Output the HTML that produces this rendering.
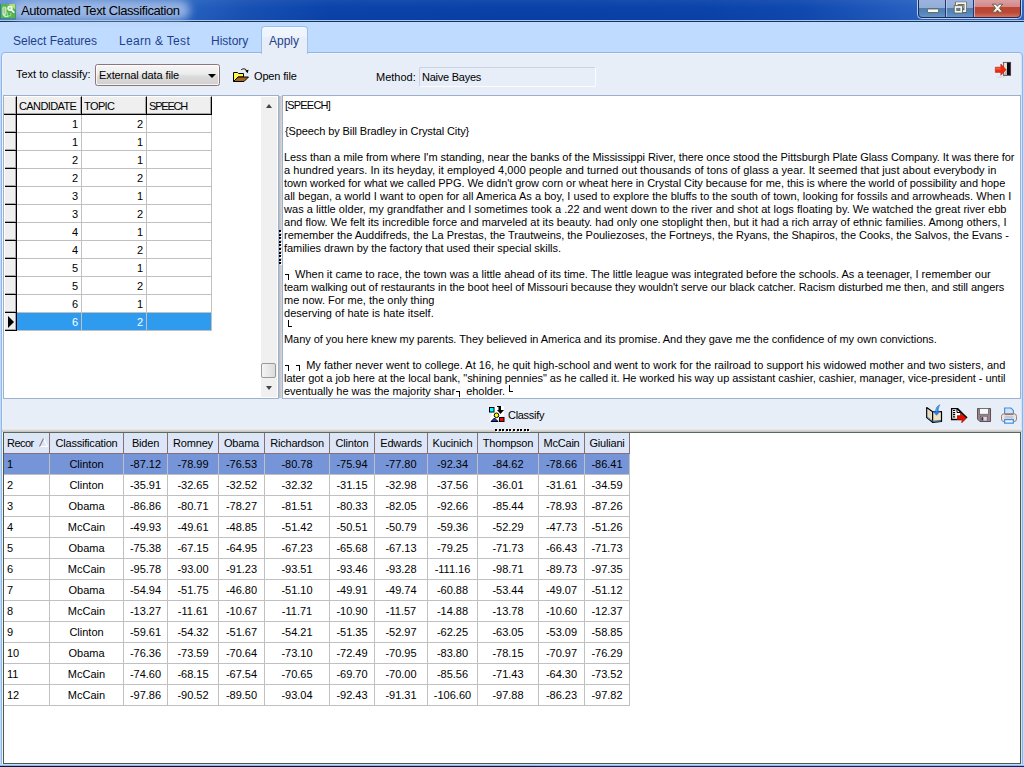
<!DOCTYPE html>
<html><head><meta charset="utf-8">
<style>
*{box-sizing:border-box;margin:0;padding:0}
html,body{width:1024px;height:767px;overflow:hidden;background:#bfdbff;font-family:"Liberation Sans",sans-serif;font-size:11px;color:#000}
.abs{position:absolute}
#title{left:0;top:0;width:1024px;height:22px;background:linear-gradient(90deg,#6492d3 0,#4a7dca 100px,#2560bf 195px,#1750b4 250px,#0a43aa 330px,#0841a8 520px,#0a43aa 700px,#0f49b0 800px,#2660c1 915px,#2c65c4 1024px)}
#title .shade{left:0;top:0;width:1024px;height:22px;background:linear-gradient(180deg,rgba(255,255,255,.05) 0,rgba(255,255,255,0) 8px,rgba(0,0,40,.04) 20px)}
#title .l1{left:0;top:20px;width:1024px;height:1px;background:#a9c6ea}
#title .l2{left:0;top:21px;width:1024px;height:1px;background:#14365c}
#ttext{left:21px;top:3px;font-size:13px;line-height:16px;color:#000;white-space:nowrap;letter-spacing:-.4px}
#tglow{left:12px;top:0px;width:178px;height:20px;border-radius:10px;background:rgba(175,198,235,.8);filter:blur(4px)}
.tab{top:34px;font-size:12px;line-height:15px;color:#1f3f8c;white-space:nowrap}
#panel{left:1px;top:52px;width:1022px;height:714px;background:#e8eef7;border:1px solid #8fb4e7;border-radius:4px 4px 0 0;box-shadow:inset 1px 1px 0 #f1f5fa,inset -1px 0 0 #d5e1f4}
#bot1{left:0;top:764px;width:1024px;height:1px;background:#c7dbf7}#bot2{left:0;top:765px;width:1024px;height:1px;background:#8fb5ea}#bot3{left:0;top:766px;width:1024px;height:1px;background:linear-gradient(90deg,#02143f,#021848 50%,#00277a 55%,#00277a)}
#atab{left:261px;top:26px;width:47px;height:28px;background:linear-gradient(180deg,#f6f9fd 0,#eff5fc 2px,#eef4fc 10px,#e8eef7 10.500px,#e8eef7 100%);border:1px solid #9dbfe9;border-bottom:none;border-radius:4px 4px 0 0}
.t11{font-size:11px;line-height:13px;white-space:nowrap}
#combo{left:95px;top:64px;width:125px;height:22px;border:1px solid #8c767c;border-radius:2.500px;box-shadow:inset 0 0 0 1px rgba(255,255,255,.75);background:linear-gradient(180deg,#f6f6f6 0,#ececec 45%,#dcdcdc 55%,#d0d0d0 100%)}
#combo .arrow{left:112px;top:9px;width:0;height:0;border:4px solid transparent;border-top:4px solid #000;border-bottom:none}
#method{left:419px;top:67px;width:177px;height:20px;border:1px solid #c9d3e3;border-right-color:#fafcff;border-bottom-color:#fafcff;border-radius:2px;background:#e8eef7}
#lgrid{left:3px;top:95px;width:276px;height:304px;background:#fff;border:1px solid #9db0d0}
.lh{top:0;height:19px;letter-spacing:-.6px;background:#efefef;border-right:1px solid #000;border-bottom:1px solid #000;border-top:1px solid #fff;box-shadow:inset -1px -1px 0 rgba(0,0,0,.3);font-size:11px;line-height:16px;white-space:nowrap;overflow:hidden}
.lh span{position:absolute;left:2px;top:1px}
.li{left:1px;width:12px;height:18px;background:#efefef;border-right:1px solid #000;border-bottom:1px solid #000;box-shadow:inset -1px -1px 0 rgba(0,0,0,.3)}
.lc{height:18px;border-right:1px solid #c0c0c0;border-bottom:1px solid #c0c0c0;font-size:11px;line-height:19px;text-align:right;padding-right:3px;background:#fff}
.lc.sel{background:#2f9bef;color:#fff}
#lsb{left:257px;top:1px;width:16px;height:300px;background:#f0f0f0}
#lsb .thumb{left:0;top:266px;width:15px;height:15px;border:1px solid #9a9a9a;border-radius:2px;background:linear-gradient(90deg,#f4f4f4,#dcdcdc)}
#memo{left:282px;top:95px;width:739px;height:304px;background:#fff;border:1px solid #9db0d0;overflow:hidden}
.ml{left:1px;font-size:11px;line-height:13px;white-space:pre;height:13px}
.cn{display:inline-block;width:4px;height:6px;border-top:1px solid #000;border-right:1px solid #000;margin:0 3px 0 1px;vertical-align:-2px}.cl{display:inline-block;width:4px;height:7px;border-left:1px solid #000;border-bottom:1px solid #000;margin:0 1px 0 1px;vertical-align:3px}
#vsplit{left:279px;top:96px;width:3px;height:302px;background:linear-gradient(90deg,#b4b8c0,#cacaca 50%,#dadada)}#vdots{left:279px;top:230px;width:2px;height:36px;background:repeating-linear-gradient(180deg,#000 0,#000 2px,transparent 2px,transparent 3.600px)}#vdotsw{left:280px;top:231px;width:2px;height:36px;background:repeating-linear-gradient(180deg,#fff 0,#fff 2px,transparent 2px,transparent 3.600px)}
#hsplit{left:2px;top:428px;width:1020px;height:4px;background:linear-gradient(180deg,#f6f6f6,#dedede 50%,#bebebe)}
#hdots{left:495px;top:429px;width:35px;height:2px;background:repeating-linear-gradient(90deg,#000 0,#000 2px,transparent 2px,transparent 3.600px)}#hdotsw{left:496px;top:430px;width:35px;height:2px;background:repeating-linear-gradient(90deg,#fff 0,#fff 2px,transparent 2px,transparent 3.600px)}
#bgrid{left:3px;top:432px;width:1018px;height:332px;background:#fff;border:1px solid #4a5a4a;border-top:1px solid #5a6a5a}
.bh{top:0;height:21px;letter-spacing:-.2px;background:#dde6f7;border-right:1px solid #866f78;border-bottom:1px solid #866f78;font-size:11px;line-height:20px;text-align:center;white-space:nowrap;overflow:hidden}
.bh.first{text-align:left;padding-left:3px}
.bc{height:21px;border-right:1px solid #c0c0c0;border-bottom:1px solid #c0c0c0;font-size:11px;line-height:20px;text-align:center;white-space:nowrap;background:#fff}
.bc.first{text-align:left;padding-left:3px}
.bc.bsel{background:#7595d8}
</style></head><body>
<div id="title" class="abs"><div class="abs shade"></div><div class="abs l1"></div><div class="abs l2"></div>
<div id="tglow" class="abs"></div>
<div id="ttext" class="abs">Automated Text Classification</div>
</div>
<div class="abs tab" style="left:13px">Select Features</div>
<div class="abs tab" style="left:119px;letter-spacing:.33px">Learn &amp; Test</div>
<div class="abs tab" style="left:211px">History</div>
<div id="panel" class="abs"></div><div id="bot1" class="abs"></div><div id="bot2" class="abs"></div><div id="bot3" class="abs"></div>
<div id="atab" class="abs"></div>
<div class="abs tab" style="left:269px">Apply</div>

<svg class="abs" style="left:916px;top:0" width="108" height="20" viewBox="0 0 108 20">
<defs>
<linearGradient id="gb" x1="0" y1="0" x2="0" y2="1"><stop offset="0" stop-color="#9db4de"/><stop offset=".48" stop-color="#93acd8"/><stop offset=".5" stop-color="#4d7fae"/><stop offset=".75" stop-color="#5585bd"/><stop offset="1" stop-color="#6a96cc"/></linearGradient>
<linearGradient id="gr" x1="0" y1="0" x2="0" y2="1"><stop offset="0" stop-color="#dba3a6"/><stop offset=".42" stop-color="#d38889"/><stop offset=".46" stop-color="#c0452e"/><stop offset=".72" stop-color="#b5493a"/><stop offset="1" stop-color="#e07258"/></linearGradient>
</defs>
<path d="M1.500 -1V14.500a4 4 0 0 0 4 4H101.500a4 4 0 0 0 4-4V-1z" fill="none" stroke="#c9d9f2" stroke-width="1" opacity=".9"/>
<path d="M2.500 -1V14a3.500 3.500 0 0 0 3.500 3.500H30V-1z" fill="url(#gb)"/>
<path d="M30 -1V17.500H57.500V-1z" fill="url(#gb)"/>
<path d="M57.500 -1V17.500H101a3.500 3.500 0 0 0 3.500-3.500V-1z" fill="url(#gr)"/>
<path d="M2.500 -1V14a3.500 3.500 0 0 0 3.500 3.500H101a3.500 3.500 0 0 0 3.500-3.500V-1" fill="none" stroke="#1d2c55" stroke-width="1"/>
<path d="M29.500 0V17M57.500 0V17" stroke="#2b2f6a" stroke-width="1"/>
<path d="M30.500 0V17M58.500 0V17" stroke="#c6d3ee" stroke-width="1" opacity=".7"/>
<rect x="11.500" y="9" width="11" height="3.500" rx=".5" fill="#fafaf4" stroke="#5b5b45" stroke-width=".8"/>
<path d="M40.800 5.500V3.200h8.500v8h-2.500" fill="none" stroke="#5b5b45" stroke-width="3"/>
<path d="M40.800 5.500V3.200h8.500v8h-2.500" fill="none" stroke="#f7f7ef" stroke-width="1.700"/>
<rect x="38.200" y="5.700" width="8.300" height="7.300" fill="#f7f7ef" stroke="#5b5b45" stroke-width=".8"/>
<rect x="40.700" y="8.200" width="3.300" height="2.500" fill="#5b82b8" stroke="#5b5b45" stroke-width=".6"/>
<path d="M76.300 4.200h3.600l1.600 2.100 1.600-2.100h3.600l-3.300 4 3.300 4h-3.600l-1.600-2.100-1.600 2.100h-3.600l3.300-4z" fill="#f7f7ef" stroke="#5b5b45" stroke-width=".9" stroke-linejoin="round"/>
</svg>
<svg class="abs" style="left:0px;top:3px" width="17" height="17" viewBox="0 0 17 17">
<rect x="0" y="1" width="16" height="15.500" fill="#2f6f9f" opacity=".75"/>
<rect x="1" y="1" width="14.300" height="14.300" fill="#56b548"/>
<path d="M9 1L15.300 1 15.300 6.500z" fill="#b4de74"/>
<path d="M6.500 1h2.500l-1.500 2.500z" fill="#8aa878" opacity=".7"/>
<rect x="2.300" y="3.500" width="4.200" height="8.500" rx="1.800" fill="#c9ecc6" opacity=".9"/>
<path d="M4.200 4.500v6" stroke="#9ab088" stroke-width=".9"/>
<circle cx="10" cy="5.300" r="2.200" fill="#d8f3d0" stroke="#f2fff0" stroke-width="1.100"/>
<circle cx="10" cy="5.300" r=".8" fill="#8ac078"/>
<path d="M11.500 7l2.300 2.200" stroke="#fff" stroke-width="1.700" stroke-linecap="round"/>
<path d="M3 11c.8 2 3 3 5.500 2.200" fill="none" stroke="#c8f0e0" stroke-width="1.400"/>
<path d="M7.500 9.500v3.300h3.300V9.500" fill="none" stroke="#a6dca0" stroke-width=".9"/>
</svg>

<div class="abs t11" style="left:16px;top:68px">Text to classify:</div>
<div class="abs" id="combo"><div class="abs t11" style="left:3px;top:4px;letter-spacing:-.1px">External data file</div><div class="abs arrow"></div></div>
<svg class="abs" style="left:232px;top:67px" width="18" height="16" viewBox="0 0 18 16"><path d="M1.500 14.500V5.500h4l1 1h5v3.500H6.500z" fill="#fff44a" stroke="#000" stroke-width="1" stroke-linejoin="round"/><path d="M1.500 14.500L6 10H16.500L12 14.500z" fill="#a5661f" stroke="#000" stroke-width="1" stroke-linejoin="round"/><path d="M9 3C10.500 1.300 14 1.300 15.200 4.300" fill="none" stroke="#000" stroke-width="1"/><path d="M13.200 3.600L15.600 6.200 16.600 2.800z" fill="#000"/></svg>
<div class="abs t11" style="left:254px;top:70px;letter-spacing:-.15px">Open file</div>
<div class="abs t11" style="left:376px;top:71px">Method:</div>
<div class="abs" id="method"><div class="abs t11" style="left:2px;top:3px;letter-spacing:-.25px">Naive Bayes</div></div>
<svg class="abs" style="left:993px;top:60px" width="19" height="18" viewBox="0 0 19 18"><rect x="10.300" y="2.300" width="7.400" height="13" fill="#0a0a14" stroke="#5a3040" stroke-width=".7"/><rect x="10.700" y="2.700" width="3.300" height="12.300" fill="#e8e2c8"/><path d="M14 9l0 6-3.300 0z" fill="#8a8aa0" opacity=".5"/><path d="M2.300 7.200h5.500V4l5.400 5.700L7.800 15.300V12.400H2.300z" fill="#ee2a10" stroke="#b01808" stroke-width=".5"/><path d="M2.600 8.800h5" stroke="#f88a7a" stroke-width=".8"/><ellipse cx="8" cy="17" rx="5" ry=".8" fill="#d6d6d6" opacity=".8"/></svg>
<div class="abs" id="lgrid">
<div class="abs lh" style="left:0;width:13px"></div>
<div class="abs lh" style="left:13px;width:65px"><span>CANDIDATE</span></div>
<div class="abs lh" style="left:78px;width:65px"><span>TOPIC</span></div>
<div class="abs lh" style="left:143px;width:65px;letter-spacing:-1.2px"><span>SPEECH</span></div>
<div class="abs li" style="top:19px"></div>
<div class="abs lc" style="left:13px;top:19px;width:65px">1</div>
<div class="abs lc" style="left:78px;top:19px;width:65px">2</div>
<div class="abs lc" style="left:143px;top:19px;width:65px"></div>
<div class="abs li" style="top:37px"></div>
<div class="abs lc" style="left:13px;top:37px;width:65px">1</div>
<div class="abs lc" style="left:78px;top:37px;width:65px">1</div>
<div class="abs lc" style="left:143px;top:37px;width:65px"></div>
<div class="abs li" style="top:55px"></div>
<div class="abs lc" style="left:13px;top:55px;width:65px">2</div>
<div class="abs lc" style="left:78px;top:55px;width:65px">1</div>
<div class="abs lc" style="left:143px;top:55px;width:65px"></div>
<div class="abs li" style="top:73px"></div>
<div class="abs lc" style="left:13px;top:73px;width:65px">2</div>
<div class="abs lc" style="left:78px;top:73px;width:65px">2</div>
<div class="abs lc" style="left:143px;top:73px;width:65px"></div>
<div class="abs li" style="top:91px"></div>
<div class="abs lc" style="left:13px;top:91px;width:65px">3</div>
<div class="abs lc" style="left:78px;top:91px;width:65px">1</div>
<div class="abs lc" style="left:143px;top:91px;width:65px"></div>
<div class="abs li" style="top:109px"></div>
<div class="abs lc" style="left:13px;top:109px;width:65px">3</div>
<div class="abs lc" style="left:78px;top:109px;width:65px">2</div>
<div class="abs lc" style="left:143px;top:109px;width:65px"></div>
<div class="abs li" style="top:127px"></div>
<div class="abs lc" style="left:13px;top:127px;width:65px">4</div>
<div class="abs lc" style="left:78px;top:127px;width:65px">1</div>
<div class="abs lc" style="left:143px;top:127px;width:65px"></div>
<div class="abs li" style="top:145px"></div>
<div class="abs lc" style="left:13px;top:145px;width:65px">4</div>
<div class="abs lc" style="left:78px;top:145px;width:65px">2</div>
<div class="abs lc" style="left:143px;top:145px;width:65px"></div>
<div class="abs li" style="top:163px"></div>
<div class="abs lc" style="left:13px;top:163px;width:65px">5</div>
<div class="abs lc" style="left:78px;top:163px;width:65px">1</div>
<div class="abs lc" style="left:143px;top:163px;width:65px"></div>
<div class="abs li" style="top:181px"></div>
<div class="abs lc" style="left:13px;top:181px;width:65px">5</div>
<div class="abs lc" style="left:78px;top:181px;width:65px">2</div>
<div class="abs lc" style="left:143px;top:181px;width:65px"></div>
<div class="abs li" style="top:199px"></div>
<div class="abs lc" style="left:13px;top:199px;width:65px">6</div>
<div class="abs lc" style="left:78px;top:199px;width:65px">1</div>
<div class="abs lc" style="left:143px;top:199px;width:65px"></div>
<div class="abs li" style="top:217px"></div>
<div class="abs lc sel" style="left:13px;top:217px;width:65px">6</div>
<div class="abs lc sel" style="left:78px;top:217px;width:65px">2</div>
<div class="abs lc sel" style="left:143px;top:217px;width:65px"></div>
<svg class="abs" style="left:4px;top:220px" width="7" height="12" viewBox="0 0 7 12"><path d="M0 0l6 6-6 6z" fill="#000"/></svg>
<div class="abs" id="lsb"><div class="abs" style="left:4.5px;top:7px;width:0;height:0;border:3.5px solid transparent;border-bottom:4px solid #444;border-top:none"></div><div class="abs" style="left:4.5px;bottom:7px;width:0;height:0;border:3.5px solid transparent;border-top:4px solid #444;border-bottom:none"></div><div class="abs thumb"></div></div>
</div>
<div class="abs" id="memo">
<div class="abs ml" style="top:3px;letter-spacing:-0.8px;left:2px">[SPEECH]</div>
<div class="abs ml" style="top:29px;letter-spacing:-0.105px;left:2px">{Speech by Bill Bradley in Crystal City}</div>
<div class="abs ml" style="top:55px;letter-spacing:-0.066px">Less than a mile from where I'm standing, near the banks of the Mississippi River, there once stood the Pittsburgh Plate Glass Company. It was there for</div>
<div class="abs ml" style="top:68px;letter-spacing:0.048px">a hundred years. In its heyday, it employed 4,000 people and turned out thousands of tons of glass a year. It seemed that just about everybody in</div>
<div class="abs ml" style="top:81px;letter-spacing:-0.051px">town worked for what we called PPG. We didn't grow corn or wheat here in Crystal City because for me, this is where the world of possibility and hope</div>
<div class="abs ml" style="top:94px;letter-spacing:0.028px">all began, a world I want to open for all America As a boy, I used to explore the bluffs to the south of town, looking for fossils and arrowheads. When I</div>
<div class="abs ml" style="top:107px;letter-spacing:0.034px">was a little older, my grandfather and I sometimes took a .22 and went down to the river and shot at logs floating by. We watched the great river ebb</div>
<div class="abs ml" style="top:120px;letter-spacing:0.025px">and flow. We felt its incredible force and marveled at its beauty. had only one stoplight then, but it had a rich array of ethnic families. Among others, I</div>
<div class="abs ml" style="top:133px;letter-spacing:-0.018px">remember the Auddifreds, the La Prestas, the Trautweins, the Pouliezoses, the Fortneys, the Ryans, the Shapiros, the Cooks, the Salvos, the Evans -</div>
<div class="abs ml" style="top:146px;letter-spacing:-0.04px">families drawn by the factory that used their special skills.</div>
<div class="abs ml" style="top:172px"><i class="cn"></i> When it came to race, the town was a little ahead of its time. The little league was integrated before the schools. As a teenager, I remember our</div>
<div class="abs ml" style="top:185px;letter-spacing:-0.059px">team walking out of restaurants in the boot heel of Missouri because they wouldn't serve our black catcher. Racism disturbed me then, and still angers</div>
<div class="abs ml" style="top:198px">me now. For me, the only thing</div>
<div class="abs ml" style="top:211px;letter-spacing:0.036px">deserving of hate is hate itself.</div>
<div class="abs ml" style="top:224px"> <i class="cl"></i></div>
<div class="abs ml" style="top:237px;letter-spacing:-0.057px">Many of you here knew my parents. They believed in America and its promise. And they gave me the confidence of my own convictions.</div>
<div class="abs ml" style="top:263px;letter-spacing:0.023px"><i class="cn"></i> <i class="cn"></i> My father never went to college. At 16, he quit high-school and went to work for the railroad to support his widowed mother and two sisters, and</div>
<div class="abs ml" style="top:276px;letter-spacing:-0.043px">later got a job here at the local bank, "shining pennies" as he called it. He worked his way up assistant cashier, cashier, manager, vice-president - until</div>
<div class="abs ml" style="top:289px;letter-spacing:-0.02px">eventually he was the majority shar<i class="cn"></i> eholder. <i class="cl"></i></div>
</div>
<div class="abs" id="vsplit"></div><div class="abs" id="vdotsw"></div><div class="abs" id="vdots"></div>
<svg class="abs" style="left:489px;top:406px" width="16" height="17" viewBox="0 0 16 17">
<path d="M6 0h9v10l-3 0-6 6H0z" fill="#fff"/>
<rect x=".5" y="1.5" width="4.5" height="4.5" fill="#0ff" stroke="#000"/>
<path d="M8 0h4v4h3l-3.5 4L8 4h1.500V1H8z" fill="#000"/>
<circle cx="7.5" cy="9.300" r="2.300" fill="#ff0" stroke="#000"/>
<path d="M2 15.500L5.500 12l3.500 3.500z" fill="#0040d0" stroke="#000"/>
<rect x="10.500" y="11.500" width="4.500" height="4" fill="#f00" stroke="#000"/>
</svg>
<svg class="abs" style="left:926px;top:404px" width="17" height="20" viewBox="0 0 17 20">
<path d="M.7 3.500L6.600 7.700V18.300L.7 13.600z" fill="#f4ecd6" stroke="#000" stroke-width="1.200" stroke-linejoin="round"/>
<path d="M6.600 7.700H15.500V17.500L6.600 18.300z" fill="#efe2c0" stroke="#000" stroke-width="1.200" stroke-linejoin="round"/>
<path d="M1.300 13.200L6.600 17.300 15 16.600" fill="none" stroke="#2a6a9a" stroke-width="1.100"/>
<path d="M3 6L3 14.500M4.800 7.300V16" stroke="#d8c9a0" stroke-width=".8"/>
<path d="M14 .8C11 2 9.600 4.300 9.600 7.500H7.200L10.500 11.300 14 7.500H12.200C12 5 12.600 3 14 .8z" fill="#2a7de0" stroke="#1f66c8" stroke-width=".5"/>
<path d="M13.500 1.300C11.500 2.500 10.600 4.500 10.500 7" fill="none" stroke="#7db8f5" stroke-width=".8"/>
</svg>
<svg class="abs" style="left:950px;top:407px" width="18" height="17" viewBox="0 0 18 17">
<path d="M1.600 1.700H7.500L11 5.200V12.500H1.600z" fill="#fff" stroke="#000" stroke-width="1.300"/>
<path d="M7 2v3.500h3.500" fill="none" stroke="#000" stroke-width="1"/>
<path d="M3 3.500h2.200M3 5.600h2.200M3 7.700h2.200M3 9.800h2.200" stroke="#000" stroke-width="1.200"/>
<path d="M7 8.200h4.500V5.500L17 10.500 11.500 16V12.700H7z" fill="#e01000"/>
<path d="M7.500 1.700L17 10.700" stroke="#000" stroke-width="1.300" fill="none"/>
<path d="M17 10.500L11.500 16" stroke="#700" stroke-width=".7" fill="none"/>
</svg>
<svg class="abs" style="left:977px;top:408px" width="14.500" height="14.500" viewBox="0 0 15 15">
<path d="M.5.500h13.500v13.500H3L.5 11.500z" fill="#a08088" stroke="#5a4a58" stroke-width="1"/>
<rect x="2.500" y=".5" width="9.500" height="6" fill="#f4f7ff" stroke="#5a6a5a" stroke-width=".8"/>
<rect x="3.500" y="8.500" width="7" height="5" fill="#d8d8d8" stroke="#5a4a58" stroke-width=".6"/>
<rect x="4.500" y="9.500" width="2" height="3.500" fill="#2a3040"/>
</svg>
<svg class="abs" style="left:1000px;top:406.500px" width="18" height="17.500" viewBox="0 0 18 18">
<path d="M4.500 1h6.500l2.500 2.500V8h-9z" fill="#cfe4fb" stroke="#3f8fe0" stroke-width="1.200"/>
<rect x="1.300" y="7" width="15.400" height="8" rx="2.500" fill="#e6e6e6" stroke="#9a7a7a" stroke-width="1"/>
<rect x="4.500" y="9" width="9" height="3" fill="#c8c8c8"/>
<path d="M4.500 13v3.500h9V13z" fill="#f4f8ff" stroke="#3f8fe0" stroke-width="1.200"/>
<path d="M4.500 7.500h9" stroke="#8a5a5a" stroke-width="1"/>
</svg>

<div class="abs t11" style="left:508px;top:409px;letter-spacing:-.3px">Classify</div>
<div class="abs" id="hsplit"></div><div class="abs" id="hdotsw"></div><div class="abs" id="hdots"></div>
<div class="abs" id="bgrid">
<div class="abs bh first" style="left:0px;width:46px;letter-spacing:-.55px">Recor</div>
<div class="abs bh" style="left:46px;width:74px">Classification</div>
<div class="abs bh" style="left:120px;width:44px">Biden</div>
<div class="abs bh" style="left:164px;width:51px">Romney</div>
<div class="abs bh" style="left:215px;width:46px">Obama</div>
<div class="abs bh" style="left:261px;width:65px">Richardson</div>
<div class="abs bh" style="left:326px;width:45px">Clinton</div>
<div class="abs bh" style="left:371px;width:53px">Edwards</div>
<div class="abs bh" style="left:424px;width:50px">Kucinich</div>
<div class="abs bh" style="left:474px;width:61px">Thompson</div>
<div class="abs bh" style="left:535px;width:46px">McCain</div>
<div class="abs bh" style="left:581px;width:45px">Giuliani</div>
<svg class="abs" style="left:34px;top:4px" width="11" height="11" viewBox="0 0 11 11"><path d="M5.500 1.500L9.500 9.500H1.500" fill="none" stroke="#fff" stroke-width="1.200"/><path d="M5.500 1.500L1.500 9.500" fill="none" stroke="#85777d" stroke-width="1.100"/></svg>
<div class="abs bc first bsel" style="left:0px;top:21px;width:46px">1</div>
<div class="abs bc bsel" style="left:46px;top:21px;width:74px">Clinton</div>
<div class="abs bc bsel" style="left:120px;top:21px;width:44px">-87.12</div>
<div class="abs bc bsel" style="left:164px;top:21px;width:51px">-78.99</div>
<div class="abs bc bsel" style="left:215px;top:21px;width:46px">-76.53</div>
<div class="abs bc bsel" style="left:261px;top:21px;width:65px">-80.78</div>
<div class="abs bc bsel" style="left:326px;top:21px;width:45px">-75.94</div>
<div class="abs bc bsel" style="left:371px;top:21px;width:53px">-77.80</div>
<div class="abs bc bsel" style="left:424px;top:21px;width:50px">-92.34</div>
<div class="abs bc bsel" style="left:474px;top:21px;width:61px">-84.62</div>
<div class="abs bc bsel" style="left:535px;top:21px;width:46px">-78.66</div>
<div class="abs bc bsel" style="left:581px;top:21px;width:45px">-86.41</div>
<div class="abs bc first" style="left:0px;top:42px;width:46px">2</div>
<div class="abs bc" style="left:46px;top:42px;width:74px">Clinton</div>
<div class="abs bc" style="left:120px;top:42px;width:44px">-35.91</div>
<div class="abs bc" style="left:164px;top:42px;width:51px">-32.65</div>
<div class="abs bc" style="left:215px;top:42px;width:46px">-32.52</div>
<div class="abs bc" style="left:261px;top:42px;width:65px">-32.32</div>
<div class="abs bc" style="left:326px;top:42px;width:45px">-31.15</div>
<div class="abs bc" style="left:371px;top:42px;width:53px">-32.98</div>
<div class="abs bc" style="left:424px;top:42px;width:50px">-37.56</div>
<div class="abs bc" style="left:474px;top:42px;width:61px">-36.01</div>
<div class="abs bc" style="left:535px;top:42px;width:46px">-31.61</div>
<div class="abs bc" style="left:581px;top:42px;width:45px">-34.59</div>
<div class="abs bc first" style="left:0px;top:63px;width:46px">3</div>
<div class="abs bc" style="left:46px;top:63px;width:74px">Obama</div>
<div class="abs bc" style="left:120px;top:63px;width:44px">-86.86</div>
<div class="abs bc" style="left:164px;top:63px;width:51px">-80.71</div>
<div class="abs bc" style="left:215px;top:63px;width:46px">-78.27</div>
<div class="abs bc" style="left:261px;top:63px;width:65px">-81.51</div>
<div class="abs bc" style="left:326px;top:63px;width:45px">-80.33</div>
<div class="abs bc" style="left:371px;top:63px;width:53px">-82.05</div>
<div class="abs bc" style="left:424px;top:63px;width:50px">-92.66</div>
<div class="abs bc" style="left:474px;top:63px;width:61px">-85.44</div>
<div class="abs bc" style="left:535px;top:63px;width:46px">-78.93</div>
<div class="abs bc" style="left:581px;top:63px;width:45px">-87.26</div>
<div class="abs bc first" style="left:0px;top:84px;width:46px">4</div>
<div class="abs bc" style="left:46px;top:84px;width:74px">McCain</div>
<div class="abs bc" style="left:120px;top:84px;width:44px">-49.93</div>
<div class="abs bc" style="left:164px;top:84px;width:51px">-49.61</div>
<div class="abs bc" style="left:215px;top:84px;width:46px">-48.85</div>
<div class="abs bc" style="left:261px;top:84px;width:65px">-51.42</div>
<div class="abs bc" style="left:326px;top:84px;width:45px">-50.51</div>
<div class="abs bc" style="left:371px;top:84px;width:53px">-50.79</div>
<div class="abs bc" style="left:424px;top:84px;width:50px">-59.36</div>
<div class="abs bc" style="left:474px;top:84px;width:61px">-52.29</div>
<div class="abs bc" style="left:535px;top:84px;width:46px">-47.73</div>
<div class="abs bc" style="left:581px;top:84px;width:45px">-51.26</div>
<div class="abs bc first" style="left:0px;top:105px;width:46px">5</div>
<div class="abs bc" style="left:46px;top:105px;width:74px">Obama</div>
<div class="abs bc" style="left:120px;top:105px;width:44px">-75.38</div>
<div class="abs bc" style="left:164px;top:105px;width:51px">-67.15</div>
<div class="abs bc" style="left:215px;top:105px;width:46px">-64.95</div>
<div class="abs bc" style="left:261px;top:105px;width:65px">-67.23</div>
<div class="abs bc" style="left:326px;top:105px;width:45px">-65.68</div>
<div class="abs bc" style="left:371px;top:105px;width:53px">-67.13</div>
<div class="abs bc" style="left:424px;top:105px;width:50px">-79.25</div>
<div class="abs bc" style="left:474px;top:105px;width:61px">-71.73</div>
<div class="abs bc" style="left:535px;top:105px;width:46px">-66.43</div>
<div class="abs bc" style="left:581px;top:105px;width:45px">-71.73</div>
<div class="abs bc first" style="left:0px;top:126px;width:46px">6</div>
<div class="abs bc" style="left:46px;top:126px;width:74px">McCain</div>
<div class="abs bc" style="left:120px;top:126px;width:44px">-95.78</div>
<div class="abs bc" style="left:164px;top:126px;width:51px">-93.00</div>
<div class="abs bc" style="left:215px;top:126px;width:46px">-91.23</div>
<div class="abs bc" style="left:261px;top:126px;width:65px">-93.51</div>
<div class="abs bc" style="left:326px;top:126px;width:45px">-93.46</div>
<div class="abs bc" style="left:371px;top:126px;width:53px">-93.28</div>
<div class="abs bc" style="left:424px;top:126px;width:50px">-111.16</div>
<div class="abs bc" style="left:474px;top:126px;width:61px">-98.71</div>
<div class="abs bc" style="left:535px;top:126px;width:46px">-89.73</div>
<div class="abs bc" style="left:581px;top:126px;width:45px">-97.35</div>
<div class="abs bc first" style="left:0px;top:147px;width:46px">7</div>
<div class="abs bc" style="left:46px;top:147px;width:74px">Obama</div>
<div class="abs bc" style="left:120px;top:147px;width:44px">-54.94</div>
<div class="abs bc" style="left:164px;top:147px;width:51px">-51.75</div>
<div class="abs bc" style="left:215px;top:147px;width:46px">-46.80</div>
<div class="abs bc" style="left:261px;top:147px;width:65px">-51.10</div>
<div class="abs bc" style="left:326px;top:147px;width:45px">-49.91</div>
<div class="abs bc" style="left:371px;top:147px;width:53px">-49.74</div>
<div class="abs bc" style="left:424px;top:147px;width:50px">-60.88</div>
<div class="abs bc" style="left:474px;top:147px;width:61px">-53.44</div>
<div class="abs bc" style="left:535px;top:147px;width:46px">-49.07</div>
<div class="abs bc" style="left:581px;top:147px;width:45px">-51.12</div>
<div class="abs bc first" style="left:0px;top:168px;width:46px">8</div>
<div class="abs bc" style="left:46px;top:168px;width:74px">McCain</div>
<div class="abs bc" style="left:120px;top:168px;width:44px">-13.27</div>
<div class="abs bc" style="left:164px;top:168px;width:51px">-11.61</div>
<div class="abs bc" style="left:215px;top:168px;width:46px">-10.67</div>
<div class="abs bc" style="left:261px;top:168px;width:65px">-11.71</div>
<div class="abs bc" style="left:326px;top:168px;width:45px">-10.90</div>
<div class="abs bc" style="left:371px;top:168px;width:53px">-11.57</div>
<div class="abs bc" style="left:424px;top:168px;width:50px">-14.88</div>
<div class="abs bc" style="left:474px;top:168px;width:61px">-13.78</div>
<div class="abs bc" style="left:535px;top:168px;width:46px">-10.60</div>
<div class="abs bc" style="left:581px;top:168px;width:45px">-12.37</div>
<div class="abs bc first" style="left:0px;top:189px;width:46px">9</div>
<div class="abs bc" style="left:46px;top:189px;width:74px">Clinton</div>
<div class="abs bc" style="left:120px;top:189px;width:44px">-59.61</div>
<div class="abs bc" style="left:164px;top:189px;width:51px">-54.32</div>
<div class="abs bc" style="left:215px;top:189px;width:46px">-51.67</div>
<div class="abs bc" style="left:261px;top:189px;width:65px">-54.21</div>
<div class="abs bc" style="left:326px;top:189px;width:45px">-51.35</div>
<div class="abs bc" style="left:371px;top:189px;width:53px">-52.97</div>
<div class="abs bc" style="left:424px;top:189px;width:50px">-62.25</div>
<div class="abs bc" style="left:474px;top:189px;width:61px">-63.05</div>
<div class="abs bc" style="left:535px;top:189px;width:46px">-53.09</div>
<div class="abs bc" style="left:581px;top:189px;width:45px">-58.85</div>
<div class="abs bc first" style="left:0px;top:210px;width:46px">10</div>
<div class="abs bc" style="left:46px;top:210px;width:74px">Obama</div>
<div class="abs bc" style="left:120px;top:210px;width:44px">-76.36</div>
<div class="abs bc" style="left:164px;top:210px;width:51px">-73.59</div>
<div class="abs bc" style="left:215px;top:210px;width:46px">-70.64</div>
<div class="abs bc" style="left:261px;top:210px;width:65px">-73.10</div>
<div class="abs bc" style="left:326px;top:210px;width:45px">-72.49</div>
<div class="abs bc" style="left:371px;top:210px;width:53px">-70.95</div>
<div class="abs bc" style="left:424px;top:210px;width:50px">-83.80</div>
<div class="abs bc" style="left:474px;top:210px;width:61px">-78.15</div>
<div class="abs bc" style="left:535px;top:210px;width:46px">-70.97</div>
<div class="abs bc" style="left:581px;top:210px;width:45px">-76.29</div>
<div class="abs bc first" style="left:0px;top:231px;width:46px">11</div>
<div class="abs bc" style="left:46px;top:231px;width:74px">McCain</div>
<div class="abs bc" style="left:120px;top:231px;width:44px">-74.60</div>
<div class="abs bc" style="left:164px;top:231px;width:51px">-68.15</div>
<div class="abs bc" style="left:215px;top:231px;width:46px">-67.54</div>
<div class="abs bc" style="left:261px;top:231px;width:65px">-70.65</div>
<div class="abs bc" style="left:326px;top:231px;width:45px">-69.70</div>
<div class="abs bc" style="left:371px;top:231px;width:53px">-70.00</div>
<div class="abs bc" style="left:424px;top:231px;width:50px">-85.56</div>
<div class="abs bc" style="left:474px;top:231px;width:61px">-71.43</div>
<div class="abs bc" style="left:535px;top:231px;width:46px">-64.30</div>
<div class="abs bc" style="left:581px;top:231px;width:45px">-73.52</div>
<div class="abs bc first" style="left:0px;top:252px;width:46px">12</div>
<div class="abs bc" style="left:46px;top:252px;width:74px">McCain</div>
<div class="abs bc" style="left:120px;top:252px;width:44px">-97.86</div>
<div class="abs bc" style="left:164px;top:252px;width:51px">-90.52</div>
<div class="abs bc" style="left:215px;top:252px;width:46px">-89.50</div>
<div class="abs bc" style="left:261px;top:252px;width:65px">-93.04</div>
<div class="abs bc" style="left:326px;top:252px;width:45px">-92.43</div>
<div class="abs bc" style="left:371px;top:252px;width:53px">-91.31</div>
<div class="abs bc" style="left:424px;top:252px;width:50px">-106.60</div>
<div class="abs bc" style="left:474px;top:252px;width:61px">-97.88</div>
<div class="abs bc" style="left:535px;top:252px;width:46px">-86.23</div>
<div class="abs bc" style="left:581px;top:252px;width:45px">-97.82</div>
</div>
</body></html>
